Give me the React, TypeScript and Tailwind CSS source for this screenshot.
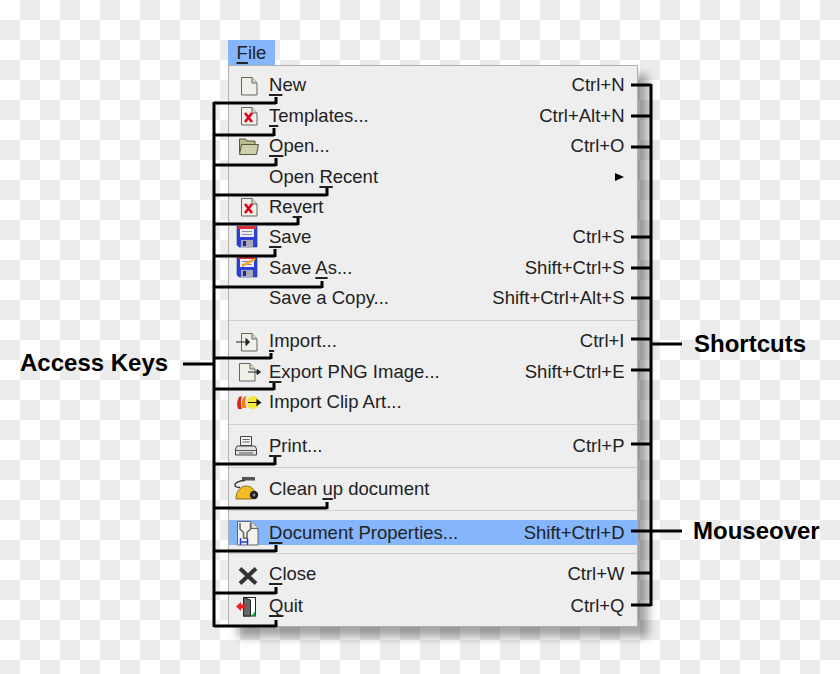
import type { ReactNode } from "react";

type MenuItem = {
  before: string;
  key?: string;
  after?: string;
  shortcut?: string;
  icon?: ReactNode;
  submenu?: boolean;
  spacing?: string;
  active?: boolean;
};

function Page({ children, shift = 0 }: { children?: ReactNode; shift?: number }) {
  return (
    <>
      <g transform={`translate(${shift} 0)`}>
        <path d="M8.500 7.500h10.500l5 5.500v12H8.500z" fill="#f1f0e8" stroke="#66665e" strokeWidth="1" strokeLinejoin="round" />
        <path d="M19 7.500v5.500h5" fill="#d8d7cc" stroke="#66665e" strokeWidth="1" strokeLinejoin="round" />
      </g>
      {children}
    </>
  );
}

function Icon({ children }: { children: ReactNode }) {
  return (
    <svg viewBox="0 0 32 32" className="h-8 w-8 shrink-0">
      {children}
    </svg>
  );
}

const redX = <path d="M12 13l7 9M19 13l-7 9" stroke="#e3001b" strokeWidth="2.600" fill="none" />;

const floppy = (
  <>
    <path d="M4 4h20v21H6l-2-2z" fill="#2c3fd6" stroke="#2233aa" strokeWidth=".6" />
    <rect x="5" y="4" width="18" height="3" fill="#d9303c" />
    <rect x="7" y="7" width="14" height="8" fill="#ece9f2" />
    <path d="M9 9.500h10M9 12.500h10" stroke="#8a8fb0" strokeWidth="1" />
    <rect x="8" y="18" width="12" height="7" fill="#a7a9b5" />
    <rect x="10" y="19" width="3" height="5" fill="#1f2b80" />
  </>
);

const items: (MenuItem | "separator")[] = [
  { before: "", key: "N", after: "ew", shortcut: "Ctrl+N", icon: <Page /> },
  { before: "", key: "T", after: "emplates...", shortcut: "Ctrl+Alt+N", icon: <Page>{redX}</Page> },
  {
    before: "",
    key: "O",
    after: "pen...",
    shortcut: "Ctrl+O",
    icon: (
      <>
        <path d="M6.500 22.500V9h6l1.500 2h8v3" fill="#b9ba8e" stroke="#55563f" strokeWidth="1" />
        <path d="M6.500 24.500l2-10h17l-2 10z" fill="#cfd0a8" stroke="#55563f" strokeWidth="1" strokeLinejoin="round" />
      </>
    ),
  },
  { before: "Open ", key: "R", after: "ecent", submenu: true },
  { before: "Re", key: "v", after: "ert", icon: <Page>{redX}</Page> },
  { before: "", key: "S", after: "ave", shortcut: "Ctrl+S", icon: floppy },
  {
    before: "Save ",
    key: "A",
    after: "s...",
    shortcut: "Shift+Ctrl+S",
    icon: (
      <>
        {floppy}
        <path d="M9 14l13-7" stroke="#f2a31b" strokeWidth="2.200" />
      </>
    ),
  },
  { before: "Save a Copy...", shortcut: "Shift+Ctrl+Alt+S" },
  "separator",
  {
    before: "",
    key: "I",
    after: "mport...",
    shortcut: "Ctrl+I",
    icon: (
      <Page>
        <path d="M3 16h13M13 12.500l3.500 3.500-3.500 3.500z" stroke="#222" strokeWidth="1" fill="#222" />
      </Page>
    ),
  },
  {
    before: "",
    key: "E",
    after: "xport PNG Image...",
    shortcut: "Shift+Ctrl+E",
    icon: (
      <Page shift={-2}>
        <path d="M15 16h11M24 13.500l3.500 2.500-3.500 2.500z" stroke="#222" strokeWidth="1" fill="#222" />
      </Page>
    ),
  },
  {
    before: "Import Clip Art...",
    icon: (
      <>
        <path d="M5 22c-1.500-4-1-8 1-12l3-1c-1.500 4-1.500 9 0 13z" fill="#d7261e" />
        <path d="M9.500 21c-1.500-4-1-7 1-11l3-1c-1.500 4-1.500 8 0 12z" fill="#ee7d1f" />
        <circle cx="20" cy="15.500" r="6.500" fill="#f5e63a" />
        <path d="M15 15.500h10M24 13l3.500 2.500-3.500 2.500z" stroke="#111" strokeWidth="1.200" fill="#111" />
      </>
    ),
  },
  "separator",
  {
    before: "",
    key: "P",
    after: "rint...",
    shortcut: "Ctrl+P",
    icon: (
      <>
        <path d="M7.500 6.500h11v9h-11z" fill="#f2f2f2" stroke="#444" strokeWidth="1" />
        <path d="M9.500 9.500h7M9.500 12h7" stroke="#666" strokeWidth="1" />
        <path d="M4 16h18l1.500 3v6h-21v-6z" fill="#e2e2e2" stroke="#444" strokeWidth="1" strokeLinejoin="round" />
        <path d="M3 20.500h20M6 23h14" stroke="#555" strokeWidth="1" />
      </>
    ),
  },
  "separator",
  {
    before: "Clean ",
    key: "u",
    after: "p document",
    icon: (
      <>
        <rect x="9" y="4" width="13" height="3.500" fill="#555" />
        <path d="M12 7.500c-5 0-10 2-10 4.500 0 2 3 2.500 5 2.500" stroke="#333" strokeWidth="1.300" fill="none" />
        <path d="M3 26c-.5-6 4-13 10-13 5 0 8 3 10 8l-4 5z" fill="#f2bd22" stroke="#6c5205" strokeWidth=".8" />
        <circle cx="21" cy="22" r="4.200" fill="#222" />
        <circle cx="21" cy="22" r="1.400" fill="#888" />
      </>
    ),
  },
  "separator",
  {
    before: "",
    key: "D",
    after: "ocument Properties...",
    shortcut: "Shift+Ctrl+D",
    active: true,
    spacing: "mt-[9px] mb-[8px] h-[25px] bg-[#85b5fa]",
    icon: (
      <>
        <path d="M4.500 4.500h13.500l7 7v16.500H4.500z" fill="#f3f2ec" stroke="#66665f" strokeWidth="1" />
        <path d="M18 4.500v7h7" fill="#dddcd2" stroke="#66665f" strokeWidth="1" />
        <path d="M7 6v6l3.500 3.500V21h3.500v-5.500L17.500 12V6" fill="none" stroke="#66665f" strokeWidth="1.500" />
        <path d="M7.500 21v7M14.500 21v7M7.500 25h7" stroke="#1f3fe0" strokeWidth="1.500" fill="none" />
      </>
    ),
  },
  "separator",
  {
    before: "",
    key: "C",
    after: "lose",
    shortcut: "Ctrl+W",
    spacing: "mt-[-1.400px] h-[30.400px]",
    icon: <path d="M7 10.500l16 15M23 10.500l-16 15" stroke="#333" strokeWidth="4" />,
  },
  {
    before: "",
    key: "Q",
    after: "uit",
    shortcut: "Ctrl+Q",
    spacing: "mt-[1.600px] h-[30.400px]",
    icon: (
      <>
        <rect x="10.500" y="7.500" width="12" height="18.500" fill="#fff" stroke="#222" strokeWidth="1" />
        <path d="M10.500 7.500l7 2.500v16h-7z" fill="#666" stroke="#222" strokeWidth="1" />
        <path d="M18 26l4.500-5v5z" fill="#1f9d3a" />
        <path d="M3 16.500l5-4.500v2.500h5v4H8V21z" fill="#ee1c25" />
      </>
    ),
  },
];

// [y of the horizontal branch, x where it ends, y where the tick starts]
const accessKeyLines = [
  [103, 276, 97],
  [135, 274, 128],
  [165, 276, 158],
  [195, 327, 188],
  [224, 298, 218],
  [256, 275, 249],
  [287, 322, 281],
  [358, 271, 353],
  [389, 274, 383],
  [464, 275, 457],
  [508, 327, 502],
  [551, 276, 545],
  [593, 276, 587],
  [626, 276, 620],
];

const shortcutLines = [85, 116, 147, 237, 268, 298, 339, 370, 444, 573, 605];

const keyClass = "underline decoration-[1.500px] underline-offset-[3px] [text-decoration-skip-ink:none]";

function Row({ item }: { item: MenuItem }) {
  return (
    <div className={`flex items-center pr-[12.500px] ${item.spacing ?? "h-[30.400px]"}`}>
      <div className="flex w-[40px] shrink-0 justify-center">{item.icon ? <Icon>{item.icon}</Icon> : null}</div>
      <span className="whitespace-pre">
        {item.before}
        {item.key && <span className={keyClass}>{item.key}</span>}
        {item.after}
      </span>
      <span className="ml-auto whitespace-pre">{item.shortcut}</span>
      {item.submenu && <span className="ml-auto h-0 w-0 border-y-[4.500px] border-l-[9px] border-y-transparent border-l-black" />}
    </div>
  );
}

export default function App() {
  return (
    <div className="relative h-[674px] w-[840px] overflow-hidden bg-[conic-gradient(#ececec_25%,#fff_0_50%,#ececec_0_75%,#fff_0)] bg-[length:40px_40px] pt-[40px] pl-[228px] font-['Liberation_Sans',Arial,sans-serif] text-[18.500px] leading-none text-[#222]">
      <div className="flex h-[25px] w-[47px] items-center justify-center bg-[#85b5fa] pt-[2px]">
        <span>
          <span className={keyClass}>F</span>ile
        </span>
      </div>
      <div className="h-[562px] w-[410px] border border-[#b0b0b0] bg-[#eeeeee] pt-[4.400px] shadow-[10px_10px_9px_rgba(0,0,0,0.36)]">
        {items.map((item, i) =>
          item === "separator" ? (
            <div key={i} className="my-[6px] h-px bg-[#cfcfcf]" />
          ) : (
            <Row key={i} item={item} />
          ),
        )}
      </div>

      <svg viewBox="0 0 840 674" className="absolute top-0 left-0 h-[674px] w-[840px]" fill="none" stroke="#000" strokeWidth="3">
        <path d="M214 102v525M183 364h31" />
        {accessKeyLines.map(([y, x, tick]) => (
          <path key={y} d={`M214 ${y}H${x}M${x} ${y + 1}V${tick}`} />
        ))}
        <path d="M651 84v522M651 344h31M631 531h51" />
        {shortcutLines.map((y) => (
          <path key={y} d={`M631 ${y}H651`} />
        ))}
      </svg>

      <span className="absolute top-[351px] left-[20px] text-[24px] font-bold text-black">Access Keys</span>
      <span className="absolute top-[332px] left-[694px] text-[24px] font-bold text-black">Shortcuts</span>
      <span className="absolute top-[519px] left-[693px] text-[24px] font-bold text-black">Mouseover</span>
    </div>
  );
}
